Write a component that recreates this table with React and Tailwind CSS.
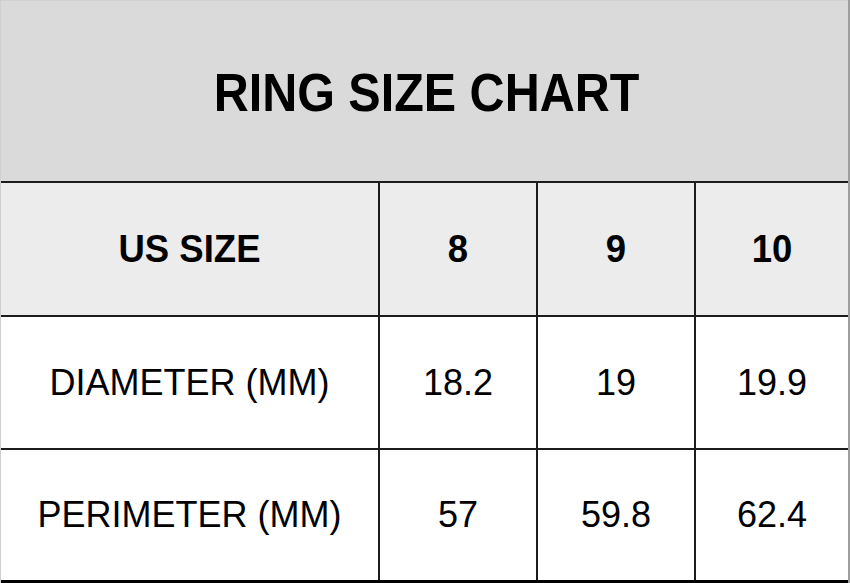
import React from 'react';

const rows = [
    { label: 'DIAMETER (MM)', values: ['18.2', '19', '19.9'] },
    { label: 'PERIMETER (MM)', values: ['57', '59.8', '62.4'] },
];

const HeadCell = ({ children }) => (
    <div className="bg-[#ececec] flex items-center justify-center">
        <span className="text-[36.5px] font-bold leading-none scale-y-[1.05]">{children}</span>
    </div>
);

const App = () => {
    return (
        <div className="w-[850px] h-[583px] bg-white font-['Liberation_Sans',Arial,sans-serif] text-black flex flex-col border-l border-l-[#cfcfcf] border-r-2 border-r-[#9e9e9e]">
            {/* Title */}
            <div className="h-[181px] bg-[#dadada] border-t border-t-[#d0d0d0] flex items-center justify-center">
                <h1 className="text-[48.5px] font-bold leading-none pl-[4px] pt-[2px] scale-y-[1.12]">RING SIZE CHART</h1>
            </div>

            {/* Table */}
            <div className="grid grid-cols-[377px_156px_156px_1fr] grid-rows-[132px_131px_130px] gap-[2px] bg-[#1c1c1c] border-t-2 border-t-[#1c1c1c] border-b-[3px] border-b-black">
                <HeadCell>US SIZE</HeadCell>
                <HeadCell>8</HeadCell>
                <HeadCell>9</HeadCell>
                <HeadCell>10</HeadCell>
                {rows.map((row) => (
                    <React.Fragment key={row.label}>
                        <div className="bg-white flex items-center justify-center text-[36px]">{row.label}</div>
                        {row.values.map((v, i) => (
                            <div key={i} className="bg-white flex items-center justify-center text-[36px]">{v}</div>
                        ))}
                    </React.Fragment>
                ))}
            </div>
        </div>
    );
};

export default App;
